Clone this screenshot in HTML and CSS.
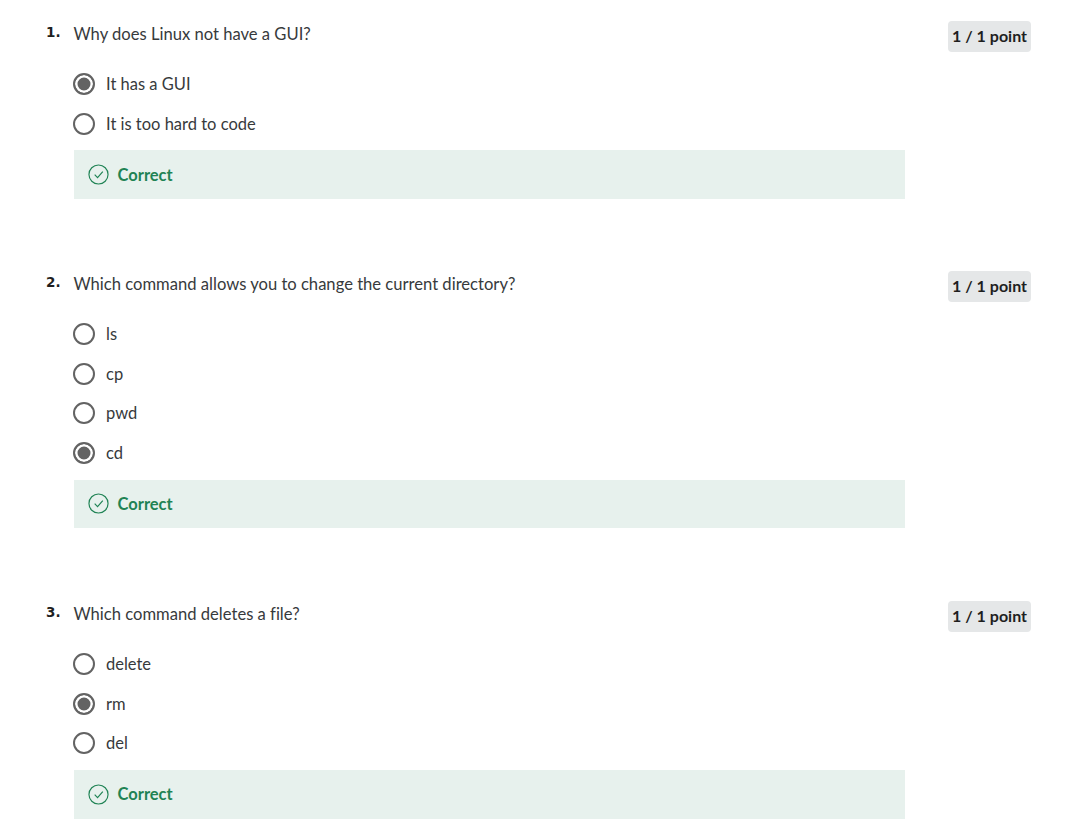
FILE: index.html
```html
<!DOCTYPE html>
<html lang="en">
<head>
    <meta charset="UTF-8">
    <title>Quiz</title>
    <link rel="stylesheet" href="styles.css">
</head>
<body>
    <div class="quiz">
        <div class="question">
            <div class="numer">1.</div>
            <div class="tresc">
                <p class="pytanie">Why does Linux not have a GUI?</p>
                <div class="opcja"><span class="radio wybrany"></span>It has a GUI</div>
                <div class="opcja"><span class="radio"></span>It is too hard to code</div>
                <div class="wynik">
                    <svg class="ikona" viewBox="0 0 22 22"><circle cx="11" cy="11" r="10"/><path d="M7 11.2l3 3 5.5-6.2"/></svg>
                    Correct
                </div>
            </div>
            <div class="punkty">1 / 1 point</div>
        </div>

        <div class="question">
            <div class="numer">2.</div>
            <div class="tresc">
                <p class="pytanie">Which command allows you to change the current directory?</p>
                <div class="opcja"><span class="radio"></span>ls</div>
                <div class="opcja"><span class="radio"></span>cp</div>
                <div class="opcja"><span class="radio"></span>pwd</div>
                <div class="opcja"><span class="radio wybrany"></span>cd</div>
                <div class="wynik">
                    <svg class="ikona" viewBox="0 0 22 22"><circle cx="11" cy="11" r="10"/><path d="M7 11.2l3 3 5.5-6.2"/></svg>
                    Correct
                </div>
            </div>
            <div class="punkty">1 / 1 point</div>
        </div>

        <div class="question">
            <div class="numer">3.</div>
            <div class="tresc">
                <p class="pytanie">Which command deletes a file?</p>
                <div class="opcja"><span class="radio"></span>delete</div>
                <div class="opcja"><span class="radio wybrany"></span>rm</div>
                <div class="opcja"><span class="radio"></span>del</div>
                <div class="wynik">
                    <svg class="ikona" viewBox="0 0 22 22"><circle cx="11" cy="11" r="10"/><path d="M7 11.2l3 3 5.5-6.2"/></svg>
                    Correct
                </div>
            </div>
            <div class="punkty">1 / 1 point</div>
        </div>
    </div>
</body>
</html>
```

FILE: styles.css
```css
* {
    margin: 0;
    padding: 0;
    box-sizing: border-box;
    font-family: "Lato", "Noto Sans", sans-serif;
    font-variant-ligatures: none;
    color: #373a3c;
}

body {
    background-color: #fff;
    overflow: hidden;
}

.quiz {
    padding: 20.8px 61px 0 46px;
}

.question {
    display: flex;
    align-items: flex-start;
    height: 250.3px;
}

.question:nth-child(2) {
    height: 330px;
}

.numer {
    width: 27.5px;
    padding-top: 1px;
    font-family: "DejaVu Sans", sans-serif;
    font-size: 13.5px;
    font-weight: 700;
    line-height: 20px;
    color: #1f1f1f;
}

.tresc {
    width: 831.5px;
}

.pytanie {
    height: 43.5px;
    font-size: 16.6px;
    line-height: 26px;
}

.opcja {
    display: flex;
    align-items: center;
    height: 39.5px;
    font-size: 16.5px;
}

.radio {
    width: 22px;
    height: 22px;
    margin-left: -0.5px;
    margin-right: 11px;
    border: 2px solid #636363;
    border-radius: 50%;
    background-color: #fff;
}

.wybrany {
    background-color: #636363;
    box-shadow: inset 0 0 0 2.5px #fff;
}

.wynik {
    display: flex;
    align-items: center;
    height: 48.5px;
    margin-top: 7px;
    padding-left: 14px;
    background-color: #e7f1ed;
    font-size: 16.5px;
    font-weight: 700;
    color: #1f8354;
}

.ikona {
    width: 21px;
    height: 21px;
    margin-right: 9px;
    fill: none;
    stroke: #1f8354;
    stroke-width: 1.2;
}

.punkty {
    margin-left: auto;
    padding: 0 4px;
    height: 31px;
    line-height: 29px;
    border-radius: 4px;
    background-color: #e5e7e8;
    font-size: 16px;
    font-weight: 700;
    color: #1f1f1f;
}
```
